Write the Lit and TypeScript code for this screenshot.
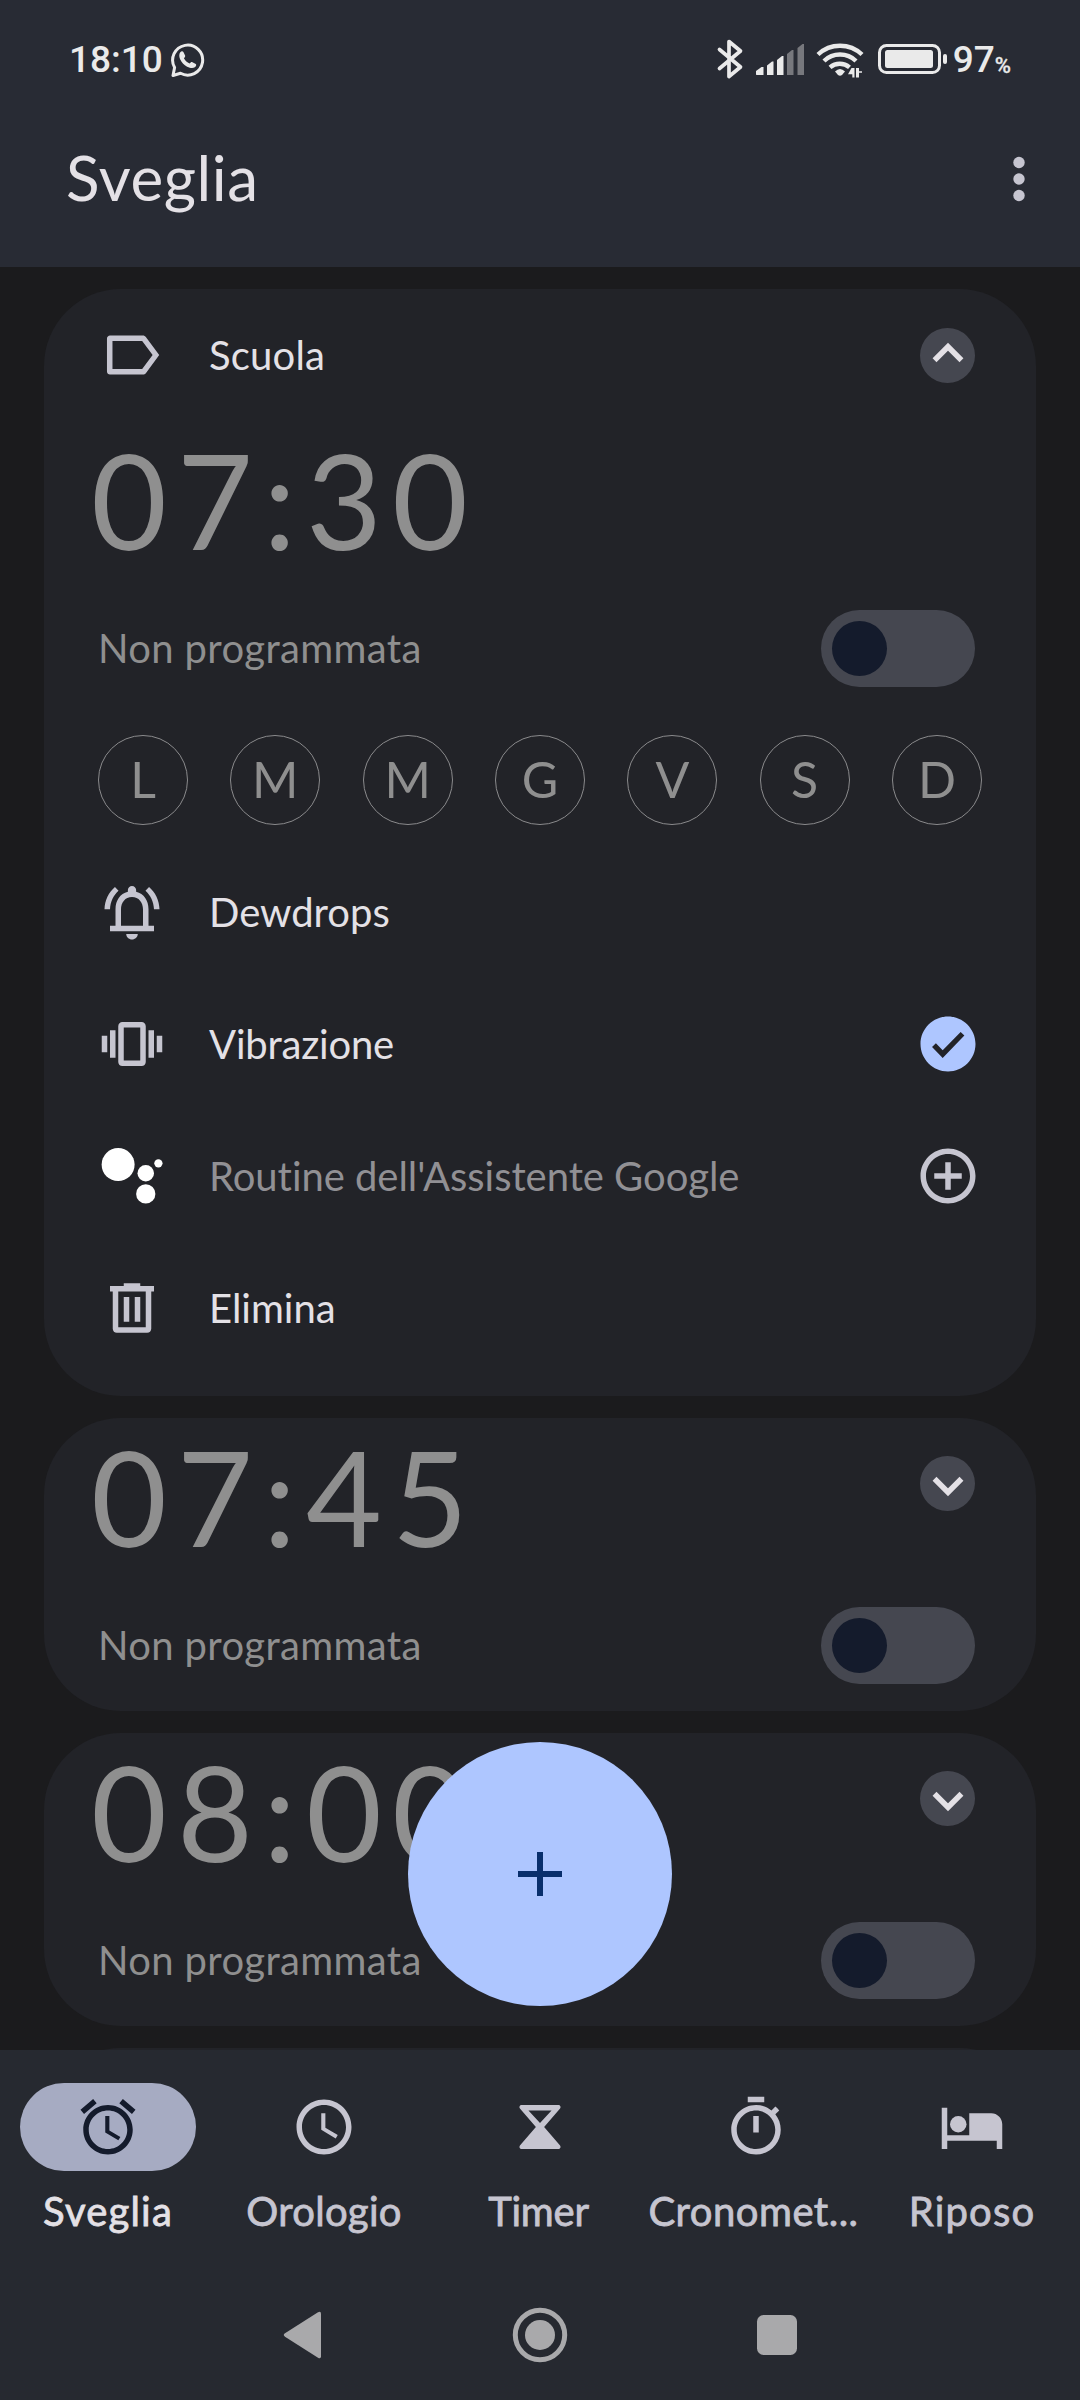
import { LitElement, html, svg, css, nothing } from "lit";
import type { SVGTemplateResult } from "lit";
import { customElement, property } from "lit/decorators.js";
import { classMap } from "lit/directives/class-map.js";

// Glyphs drawn on a 24-unit grid.
const GLYPHS: Record<string, SVGTemplateResult> = {
  label: svg`<path fill-rule="evenodd" d="M4 4.9h11.9c.5 0 .9.2 1.2.6L21.9 12l-4.8 6.5c-.3.4-.7.6-1.2.6H4c-.6 0-1.1-.5-1.1-1.1V6c0-.6.5-1.1 1.1-1.1zM4.9 6.9v10.2h10.8L19.5 12l-3.8-5.1z"/>`,
  bell: svg`<path d="M18 17v-6c0-3.07-1.63-5.64-4.5-6.32V4c0-.83-.67-1.5-1.5-1.5s-1.5.67-1.5 1.5v.68C7.64 5.36 6 7.92 6 11v6H4v2h16v-2h-2zm-2 0H8v-6c0-2.48 1.51-4.5 4-4.5s4 2.02 4 4.5v6zM12 22c1.1 0 2.1-.9 2.1-2H9.9c0 1.1 1 2 2.1 2zM7.1 4.3 5.8 2.9C3.5 4.9 2.1 7.7 2 11h2c.1-2.7 1.3-5.1 3.1-6.7zM20 11h2c-.1-3.3-1.5-6.1-3.8-8.1l-1.3 1.4c1.8 1.6 3 4 3.1 6.7z"/>`,
  vibration: svg`<path fill-rule="evenodd" d="M1 15h2V9H1v6zm3 2h2V7H4v10zm17-8v6h2V9h-2zm-3 8h2V7h-2v10zM15.5 4h-7C7.67 4 7 4.67 7 5.5v13c0 .83.67 1.5 1.5 1.5h7c.83 0 1.5-.67 1.5-1.5v-13c0-.83-.67-1.5-1.5-1.5zM15 18H9V6h6v12z"/>`,
  assistant: svg`<circle cx="6.95" cy="7.85" r="6"/><circle cx="17" cy="11" r="3"/><circle cx="21.6" cy="7.4" r="1.5"/><circle cx="17" cy="18.5" r="3.5"/>`,
  trash: svg`<path fill-rule="evenodd" d="M9 3h6v1h5v2h-1v13.500c0 .83-.67 1.500-1.500 1.500h-11C5.670 21 5 20.330 5 19.500V6H4V4h5zM7 6v13h10V6zM9 8h2v9H9zM13 8h2v9h-2z"/>`,
  check: svg`<path fill-rule="evenodd" d="M12 2C6.480 2 2 6.480 2 12s4.480 10 10 10 10-4.480 10-10S17.520 2 12 2zM10.070 17.100 6.200 13.050 7.600 11.700 10.070 14.250 16.600 7.600 17.950 8.950z"/>`,
  add: svg`<path fill-rule="evenodd" d="M13 7h-2v4H7v2h4v4h2v-4h4v-2h-4V7zm-1-5C6.480 2 2 6.480 2 12s4.480 10 10 10 10-4.480 10-10S17.520 2 12 2zm0 18c-4.410 0-8-3.590-8-8s3.590-8 8-8 8 3.590 8 8-3.590 8-8 8z"/>`,
  alarm: svg`<path d="M22 5.72l-4.6-3.86-1.29 1.53 4.6 3.86L22 5.72zM7.88 3.39L6.6 1.86 2 5.71l1.29 1.53 4.59-3.85zM12.5 8H11v6l4.75 2.85.75-1.23-4-2.37V8zM12 4c-4.97 0-9 4.03-9 9s4.02 9 9 9c4.97 0 9-4.03 9-9s-4.03-9-9-9zm0 16c-3.87 0-7-3.13-7-7s3.13-7 7-7 7 3.13 7 7-3.13 7-7 7z"/>`,
  clock: svg`<path d="M11.99 2C6.47 2 2 6.48 2 12s4.47 10 9.990 10C17.520 22 22 17.520 22 12S17.520 2 11.990 2zM12 20c-4.420 0-8-3.580-8-8s3.580-8 8-8 8 3.580 8 8-3.580 8-8 8zM12.500 7H11v6l5.250 3.150.75-1.230-4.500-2.670z"/>`,
  hourglass: svg`<path fill-rule="evenodd" d="M5.300 4h13.400c.7 0 1 .8.6 1.300L13.500 12l5.800 6.700c.4.5.1 1.300-.6 1.300H5.300c-.7 0-1-.8-.6-1.300L10.500 12 4.700 5.300C4.300 4.800 4.600 4 5.300 4zM7.800 6 12 10.500 16.200 6z"/>`,
  stopwatch: svg`<path d="M15 1H9v2h6V1zm-4 13h2V8h-2v6zm8.030-6.610 1.420-1.420c-.43-.51-.9-.99-1.410-1.410l-1.420 1.420C16.070 4.740 14.120 4 12 4c-4.970 0-9 4.030-9 9s4.020 9 9 9 9-4.030 9-9c0-2.120-.74-4.070-1.970-5.610zM12 20c-3.870 0-7-3.130-7-7s3.130-7 7-7 7 3.130 7 7-3.130 7-7 7z"/>`,
  bed: svg`<circle cx="7" cy="11" r="3"/><path d="M19 7h-8v8H3V5H1v15h2v-3h18v3h2v-9c0-2.210-1.790-4-4-4z"/>`,
  up: svg`<path fill="none" stroke="currentColor" stroke-width="2" d="M7.100 13.900 12 9l4.900 4.900"/>`,
  down: svg`<path fill="none" stroke="currentColor" stroke-width="2" d="M7.100 10.100 12 15l4.900-4.900"/>`,
};

@customElement("clock-icon")
export class ClockIcon extends LitElement {
  @property() name = "";

  static styles = css`
    :host { display: block; flex: none; width: 66px; height: 66px; }
    .glyph { display: block; width: 100%; height: 100%; fill: currentColor; }
  `;

  render() {
    return html`<svg class="glyph" viewBox="0 0 24 24">${GLYPHS[this.name]}</svg>`;
  }
}

@customElement("alarm-card")
export class AlarmCard extends LitElement {
  @property() time = "";
  @property() label = "";
  @property({ type: Boolean }) expanded = false;

  static styles = css`
    :host {
      display: block;
      flex: none;
      box-sizing: border-box;
      height: 293px;
      border-radius: 77px;
      background: #222328;
      color: #e4e1e6;
      font-size: 40px;
      line-height: 48px;
      font-variant-ligatures: none;
    }
    :host([expanded]) { height: 1107px; }
    .row { display: flex; align-items: center; height: 132px; padding: 0 55px; }
    .row clock-icon { color: #c6c5d0; }
    .name { flex: 1; margin-left: 44px; }
    .scuola { letter-spacing: 0.2px; }
    .vibrazione { letter-spacing: -0.2px; }
    .routine { letter-spacing: -0.05px; color: #919094; }
    .row .white { color: #fff; }
    .row .on { color: #aec6ff; }
    .chevron {
      flex: none;
      width: 55px;
      height: 55px;
      margin-right: 6px;
      border-radius: 50%;
      background: #454750;
    }
    .chevron clock-icon { margin: -5.500px; }
    .row .chevron clock-icon { color: #e4e1e6; }
    .head { display: flex; justify-content: space-between; height: 158px; padding: 0 55px 0 47px; }
    .head .chevron { margin-top: 38px; }
    .head clock-icon { color: #e4e1e6; }
    .time {
      padding-top: 4px;
      font-size: 131px;
      line-height: 150px;
      letter-spacing: 10.100px;
      color: #8f8f8f;
    }
    .status { display: flex; align-items: center; justify-content: space-between; height: 77px; padding: 0 61px 0 54px; margin-top: 31px; }
    .note { padding-bottom: 1px; letter-spacing: 0.35px; color: #8f8f8f; }
    .toggle { display: flex; align-items: center; box-sizing: border-box; width: 154px; height: 77px; padding: 0 11px; border-radius: 39px; background: #454750; }
    .knob { width: 55px; height: 55px; border-radius: 50%; background: #141b2c; }
    .days { display: flex; justify-content: space-between; padding: 0 54px; margin: 48px 0 21px; }
    .day {
      display: grid;
      place-items: center;
      box-sizing: border-box;
      width: 90px;
      height: 90px;
      padding-bottom: 3px;
      border: 1px solid #8a8a8c;
      border-radius: 50%;
      font-size: 50px;
      color: #8f8f8f;
    }
  `;

  render() {
    return html`
      ${this.expanded
        ? html`<div class="row">
            <clock-icon name="label"></clock-icon>
            <span class="name scuola">${this.label}</span>
            <div class="chevron"><clock-icon name="up"></clock-icon></div>
          </div>`
        : nothing}
      <div class="head">
        <div class="time">${this.time}</div>
        ${this.expanded ? nothing : html`<div class="chevron"><clock-icon name="down"></clock-icon></div>`}
      </div>
      <div class="status">
        <span class="note">Non programmata</span>
        <div class="toggle"><div class="knob"></div></div>
      </div>
      ${this.expanded
        ? html`<div class="days">${["L", "M", "M", "G", "V", "S", "D"].map((d) => html`<div class="day">${d}</div>`)}</div>
            <div class="row"><clock-icon name="bell"></clock-icon><span class="name">Dewdrops</span></div>
            <div class="row">
              <clock-icon name="vibration"></clock-icon><span class="name vibrazione">Vibrazione</span>
              <clock-icon class="on" name="check"></clock-icon>
            </div>
            <div class="row">
              <clock-icon class="white" name="assistant"></clock-icon>
              <span class="name routine">Routine dell'Assistente Google</span>
              <clock-icon name="add"></clock-icon>
            </div>
            <div class="row"><clock-icon name="trash"></clock-icon><span class="name">Elimina</span></div>`
        : nothing}
    `;
  }
}

@customElement("app-root")
export class AppRoot extends LitElement {
  static styles = css`
    :host {
      display: flex;
      flex-direction: column;
      position: relative;
      width: 1080px;
      height: 2400px;
      overflow: hidden;
      background: #1b1b1d;
      font-family: Lato, "Open Sans", sans-serif;
      font-variant-ligatures: none;
    }
    .header { flex: none; box-sizing: border-box; height: 267px; background: #282b34; }
    .statusbar {
      display: flex;
      align-items: center;
      justify-content: space-between;
      box-sizing: border-box;
      height: 120px;
      padding: 0 69px 0 69px;
      color: #eaeaea;
      font: 500 37px/44px Roboto, sans-serif;
    }
    .left, .right { display: flex; align-items: center; }
    .whatsapp { width: 34px; height: 36px; margin-left: 8px; }
    .indicators { display: block; width: 236px; height: 48px; margin-right: 1px; }
    .percent { font-size: 22px; padding-top: 11px; -webkit-text-stroke: 0.3px #eaeaea; }
    .titlebar { display: flex; align-items: center; justify-content: space-between; height: 117px; padding: 0 28px 0 66px; color: #e4e1e6; }
    .title { padding-bottom: 3px; font-size: 62px; line-height: 72px; letter-spacing: 0.6px; }
    .more { display: block; width: 66px; height: 66px; fill: #c6c5d0; }
    .list { flex: 1; min-height: 0; display: flex; flex-direction: column; gap: 22px; padding: 22px 44px 0; overflow: hidden; }
    .next { flex: none; height: 154px; border-radius: 77px; background: #222328; }
    .fab {
      position: absolute;
      left: 408px;
      top: 1742px;
      display: grid;
      place-items: center;
      width: 264px;
      height: 264px;
      border-radius: 50%;
      background: #aec6ff;
    }
    .plus { width: 44px; height: 44px; stroke: #092f6c; stroke-width: 6; }
    .tabs { flex: none; display: grid; grid-template-columns: repeat(5, 216px); box-sizing: border-box; height: 230px; padding-top: 33px; background: #262930; }
    .tab { display: flex; flex-direction: column; align-items: center; color: #c6c5d0; }
    .pill { display: grid; place-items: center; width: 176px; height: 88px; border-radius: 44px; }
    .caption { margin-top: 16px; font-size: 40px; line-height: 48px; white-space: nowrap; letter-spacing: 0.3px; -webkit-text-stroke: 0.8px currentColor; }
    .tab:nth-child(1) .caption, .tab:nth-child(5) .caption { letter-spacing: 1.200px; }
    .tab:nth-child(3) .caption { letter-spacing: -0.2px; margin-left: -3px; }
    .tab:nth-child(4) .caption { letter-spacing: 0.5px; margin-left: -5px; }
    .active .pill { background: #a6abc2; color: #141b2c; }
    .active .caption { color: #e4e1e6; }
    .system { flex: none; display: flex; justify-content: center; box-sizing: border-box; height: 120px; background: #262930; }
    .keys { display: block; width: 540px; height: 110px; fill: #a9a9ab; }
  `;

  private tabs = [
    { icon: "alarm", text: "Sveglia" },
    { icon: "clock", text: "Orologio" },
    { icon: "hourglass", text: "Timer" },
    { icon: "stopwatch", text: "Cronomet..." },
    { icon: "bed", text: "Riposo" },
  ];

  render() {
    return html`
      <div class="header">
        <div class="statusbar">
          <div class="left">
            <span>18:10</span>
            <svg class="whatsapp" viewBox="0 0 34 36">
              <path fill="none" stroke="#eaeaea" stroke-width="3" stroke-linejoin="round" d="M2 33.500 3.600 25.500A15 15 0 1 1 9.500 31.300z"/>
              <path fill="#eaeaea" d="M9.300 10.200c.9-1.200 2.500-1.300 3.100-.2l1.700 3.600c.3.700-.1 1.600-1.200 2.700 1.400 2.700 3.200 4.200 5.700 5.200 1-1.300 1.700-1.800 2.400-1.500l3.800 1.900c.9.6.3 2.500-1 3.400-1.700 1.200-4.500 1-7.700-.6-3-1.500-5.800-4.600-7.100-7.700-1.100-2.700-.9-5.300.3-6.800z"/>
            </svg>
          </div>
          <div class="right">
            <svg class="indicators" viewBox="715 36 236 48">
              <path fill="none" stroke="#eaeaea" stroke-width="3.700" stroke-linecap="round" stroke-linejoin="round" d="M718.500 49.500 739.500 67 728 76.500V41.500L739.500 51 718.500 68.500"/>
              <g fill="#eaeaea">
                <path d="M755 74.500v-3.500l5.500-4h2v8h-7z"/>
                <path d="M766 75v-9.500l5-4h1.500V75z"/>
                <path d="M776 75V60l5-4h1.500v19z"/>
                <path fill="#77787d" d="M786 75V54l5-4h1.500v25zM796.500 75V48l5-4h1.500v31z"/>
              </g>
              <g fill="none" stroke="#eaeaea" stroke-width="4.400">
                <path d="M817 54.500a32 32 0 0 1 44 0"/>
                <path d="M823 61a23 23 0 0 1 32 0"/>
                <path d="M829 67.300a15 15 0 0 1 19.500 0"/>
              </g>
              <path fill="#eaeaea" d="M834 71.500q5-5 10 0l-3 3.500q-2 1.600-4 0z"/>
              <path fill="#eaeaea" d="M850.500 68h3v9.500h-2.200v-3.300h-4.300zM855 68h3v3.300h3v1.500l-3 0v4.700h-3z"/>
              <rect x="878.500" y="45.500" width="60" height="27" rx="7" fill="none" stroke="#eaeaea" stroke-width="3"/>
              <rect x="884" y="50" width="48" height="18" rx="2.500" fill="#eaeaea"/>
              <rect x="942" y="54" width="4" height="10" rx="2" fill="#eaeaea"/>
            </svg>
            <span>97</span><span class="percent">%</span>
          </div>
        </div>
        <div class="titlebar">
          <div class="title">Sveglia</div>
          <svg class="more" viewBox="0 0 66 66"><circle cx="33" cy="16.500" r="5.700"/><circle cx="33" cy="33" r="5.700"/><circle cx="33" cy="49.500" r="5.700"/></svg>
        </div>
      </div>
      <div class="list">
        <alarm-card expanded label="Scuola" time="07:30"></alarm-card>
        <alarm-card time="07:45"></alarm-card>
        <alarm-card time="08:00"></alarm-card>
        <div class="next"></div>
      </div>
      <div class="tabs">
        ${this.tabs.map((t, i) => html`<div class=${classMap({ tab: true, active: i === 0 })}>
          <div class="pill"><clock-icon name=${t.icon}></clock-icon></div>
          <div class="caption">${t.text}</div>
        </div>`)}
      </div>
      <div class="system">
        <svg class="keys" viewBox="270 2280 540 110">
          <path d="M285 2333.300 318 2312.200q3-1.500 3 1.500v42.600q0 3-3 1.500L285 2336.700q-2.500-1.700 0-3.400z"/>
          <circle cx="540" cy="2335" r="24.700" fill="none" stroke="#a9a9ab" stroke-width="5"/>
          <circle cx="540" cy="2335" r="15"/>
          <rect x="757" y="2315" width="40" height="40" rx="6.500"/>
        </svg>
      </div>
      <div class="fab"><svg class="plus" viewBox="0 0 44 44"><path d="M22 0v44M0 22h44"/></svg></div>
    `;
  }
}
